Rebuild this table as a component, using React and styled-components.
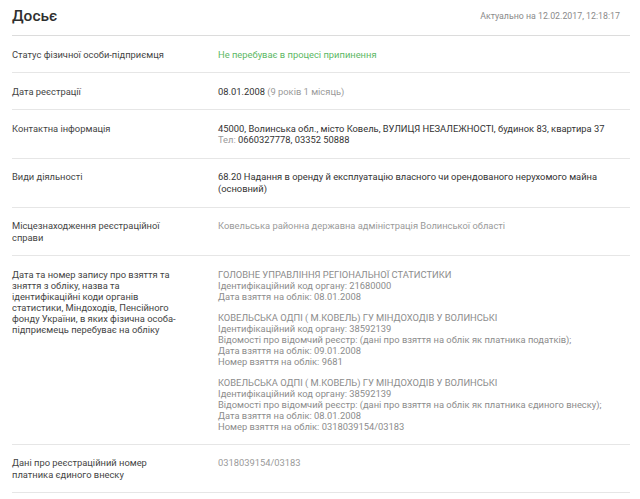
import React from 'react'
import styled, { createGlobalStyle } from 'styled-components'

const GlobalStyle = createGlobalStyle`
  body {
    margin: 0;
    background: #fff;
    font-family: Roboto, "Liberation Sans", sans-serif;
  }
`

const Page = styled.div`
  padding: 0 10px 0 12px;
  width: 640px;
  box-sizing: border-box;
`

const Header = styled.div`
  display: flex;
  justify-content: space-between;
  align-items: center;
  height: 36px;
  padding-bottom: 3px;
  border-bottom: 1px solid #dcdcdc;
  box-sizing: border-box;
`

const Title = styled.h1`
  margin: 0;
  font-size: 15.5px;
  font-weight: 500;
  color: #2f2f2f;
`

const Actual = styled.span`
  font-size: 8.8px;
  color: #8a8a8a;
  padding-right: 10px;
`

const Row = styled.div`
  display: flex;
  border-bottom: 1px solid #e6e6e6;
  padding: 12.5px 0 12px;
  font-size: 9.35px;
  line-height: ${p => (p.$tight ? '11px' : '11.6px')};
`

const Label = styled.div`
  width: 176px;
  padding-right: 30px;
  flex-shrink: 0;
  color: #444;
`

const Value = styled.div`
  flex: 1;
  color: ${p => (p.$tone === 'green' ? '#5cb864' : p.$tone === 'muted' ? '#9a9a9a' : '#333')};
`

const Note = styled.span`
  color: #9a9a9a;
`

const Block = styled.div`
  color: #8c8c8c;
  & + & {
    margin-top: 10px;
  }
`

const blocks = [
  [
    'ГОЛОВНЕ УПРАВЛІННЯ РЕГІОНАЛЬНОЇ СТАТИСТИКИ',
    'Ідентифікаційний код органу: 21680000',
    'Дата взяття на облік: 08.01.2008',
  ],
  [
    'КОВЕЛЬСЬКА ОДПІ ( М.КОВЕЛЬ) ГУ МІНДОХОДІВ У ВОЛИНСЬКІ',
    'Ідентифікаційний код органу: 38592139',
    'Відомості про відомчий реєстр: (дані про взяття на облік як платника податків);',
    'Дата взяття на облік: 09.01.2008',
    'Номер взяття на облік: 9681',
  ],
  [
    'КОВЕЛЬСЬКА ОДПІ ( М.КОВЕЛЬ) ГУ МІНДОХОДІВ У ВОЛИНСЬКІ',
    'Ідентифікаційний код органу: 38592139',
    'Відомості про відомчий реєстр: (дані про взяття на облік як платника єдиного внеску);',
    'Дата взяття на облік: 08.01.2008',
    'Номер взяття на облік: 0318039154/03183',
  ],
]

const App = () => {
  return (
    <Page>
      <GlobalStyle />
      <Header>
        <Title>Досьє</Title>
        <Actual>Актуально на 12.02.2017, 12:18:17</Actual>
      </Header>

      <Row>
        <Label>Статус фізичної особи-підприємця</Label>
        <Value $tone="green">Не перебуває в процесі припинення</Value>
      </Row>

      <Row>
        <Label>Дата реєстрації</Label>
        <Value>08.01.2008 <Note>(9 років 1 місяць)</Note></Value>
      </Row>

      <Row>
        <Label>Контактна інформація</Label>
        <Value>
          45000, Волинська обл., місто Ковель, ВУЛИЦЯ НЕЗАЛЕЖНОСТІ, будинок 83, квартира 37
          <br />
          <Note>Тел:</Note> 0660327778, 03352 50888
        </Value>
      </Row>

      <Row>
        <Label>Види діяльності</Label>
        <Value>
          68.20 Надання в оренду й експлуатацію власного чи орендованого нерухомого майна (основний)
        </Value>
      </Row>

      <Row>
        <Label>Місцезнаходження реєстраційної справи</Label>
        <Value $tone="muted">Ковельська районна державна адміністрація Волинської області</Value>
      </Row>

      <Row $tight>
        <Label>
          Дата та номер запису про взяття та зняття з обліку, назва та ідентифікаційні коди органів
          статистики, Міндоходів, Пенсійного фонду України, в яких фізична особа-підприємець
          перебуває на обліку
        </Label>
        <Value>
          {blocks.map((lines, i) => (
            <Block key={i}>
              {lines.map((l, j) => (
                <div key={j}>{l}</div>
              ))}
            </Block>
          ))}
        </Value>
      </Row>

      <Row>
        <Label>Дані про реєстраційний номер платника єдиного внеску</Label>
        <Value $tone="muted">0318039154/03183</Value>
      </Row>
    </Page>
  )
}

export default App
